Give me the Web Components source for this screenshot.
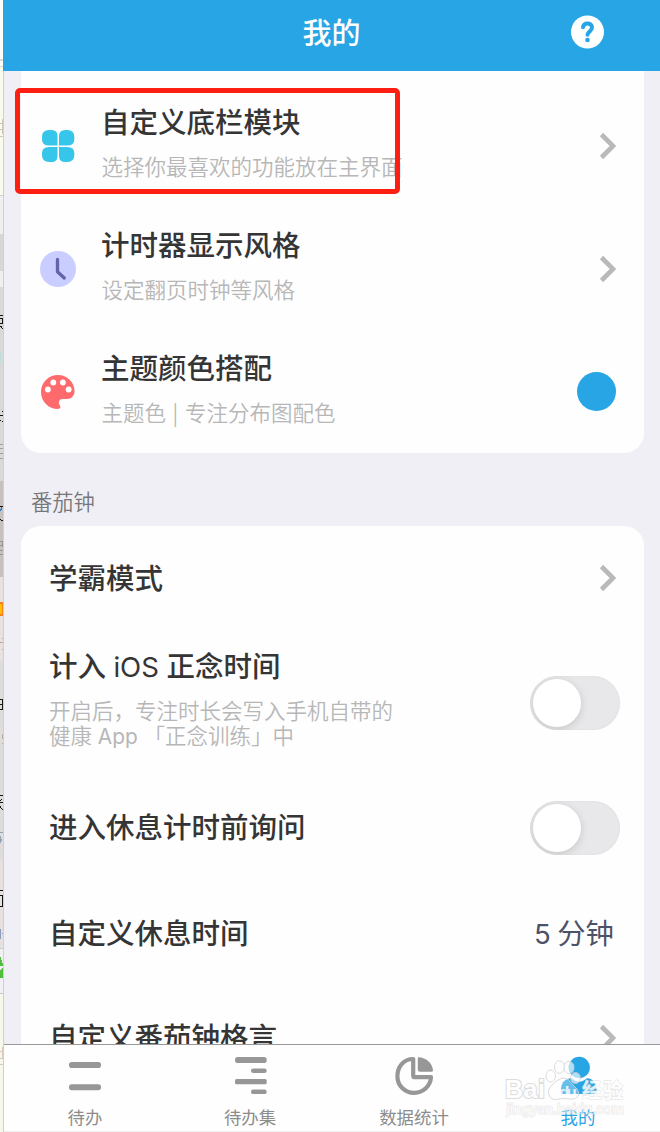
<!DOCTYPE html>
<html lang="zh-CN">
<head>
<meta charset="utf-8">
<title>我的</title>
<style>
  html, body {
    margin: 0;
    height: 100%;
    overflow: hidden;
  }

  body {
    --blue: #27a5e4;
    --page-color: #f0eff5;
    --ink: #353535;
    --muted: #b7b7b7;
    font-family: "Noto Sans CJK SC", sans-serif;
    color: var(--ink);
  }
</style>
</head>
<body>
<settings-app>
  <edge-strip slot="edge"></edge-strip>
  <app-header slot="header">我的</app-header>

  <settings-card first>
    <settings-row icon="clover" arrow marked>自定义底栏模块<span slot="sub">选择你最喜欢的功能放在主界面</span></settings-row>
    <settings-row icon="clock" arrow>计时器显示风格<span slot="sub">设定翻页时钟等风格</span></settings-row>
    <settings-row icon="palette">主题颜色搭配<span slot="sub">主题色 | 专注分布图配色</span><color-dot slot="end"></color-dot></settings-row>
  </settings-card>

  <section-label>番茄钟</section-label>

  <settings-card>
    <settings-row arrow>学霸模式</settings-row>
    <settings-row tall>计入 <latin-text>iOS</latin-text> 正念时间<span slot="sub">开启后，专注时长会写入手机自带的<br>健康 <latin-text>App</latin-text> 「正念训练」中</span><toggle-switch slot="end"></toggle-switch></settings-row>
    <settings-row>进入休息计时前询问<toggle-switch slot="end"></toggle-switch></settings-row>
    <settings-row value>自定义休息时间<span slot="end"><latin-text>5</latin-text> 分钟</span></settings-row>
    <settings-row arrow>自定义番茄钟格言</settings-row>
  </settings-card>

  <tab-bar slot="tabs">
    <tab-item icon="todo">待办</tab-item>
    <tab-item icon="todoset">待办集</tab-item>
    <tab-item icon="stats">数据统计</tab-item>
    <tab-item icon="me" active>我的</tab-item>
  </tab-bar>
  <site-mark slot="mark"></site-mark>
</settings-app>

<script>
const icons = {
  clover: `<svg width="36" height="36" viewBox="0 0 36 36" fill="#36c6ea">
    <path d="M9 2h2.500q6 0 6 6v9.500H9Q2 17.500 2 11.500V9Q2 2 9 2z"/>
    <path d="M27.300 2h-2q-6.300 0-6.300 6v9.500h8.300q7 0 7-6V9q0-7-7-7z"/>
    <path d="M9 34h2.500q6 0 6-6v-9H9q-7 0-7 6v2q0 7 7 7z"/>
    <path d="M27.300 34h-2q-6.300 0-6.300-6v-9h8.300q7 0 7 6v2q0 7-7 7z"/>
  </svg>`,
  clock: `<svg width="36" height="36" viewBox="0 0 36 36">
    <circle cx="18" cy="18" r="18" fill="#c9cdff"/>
    <path d="M17.500 8.500v12.200l6.800 6.300" fill="none" stroke="#6264aa" stroke-width="3.300" stroke-linecap="round" stroke-linejoin="round"/>
  </svg>`,
  palette: `<svg width="36" height="36" viewBox="0 0 36 36">
    <path d="M18 1C8.500 1 1 8.500 1 18s7.500 17 17 17c2.500 0 3-2 1.800-3.700C18 28.500 19 25 22.500 25H27c4.500 0 7.500-3.500 7.500-8C34.500 8 27 1 18 1z" fill="#ff6b6c"/>
    <g fill="#fff"><circle cx="7.900" cy="15.500" r="2.900"/><circle cx="13.300" cy="8.500" r="2.900"/><circle cx="22.900" cy="8.500" r="2.900"/><circle cx="28.700" cy="15.500" r="2.900"/></g>
  </svg>`,
  todo: `<svg width="40" height="40" viewBox="0 0 40 40" fill="#979797">
    <rect x="3" y="6" width="32" height="6" rx="2.800"/><rect x="3" y="28.300" width="32" height="6" rx="2.800"/>
  </svg>`,
  todoset: `<svg width="40" height="40" viewBox="0 0 40 40" fill="#979797">
    <rect x="5" y="1" width="31.700" height="6" rx="2.800"/><rect x="21" y="12.400" width="15.700" height="4.500" rx="2.200"/>
    <rect x="5" y="23" width="31.700" height="5.300" rx="1.500"/><rect x="21" y="33.600" width="15.700" height="4.500" rx="2.200"/>
  </svg>`,
  stats: `<svg width="40" height="40" viewBox="0 0 40 40">
    <path d="M19.200 3C9.500 3 3.400 11 3.400 20.200c0 9.300 7.300 16.700 16.800 16.700 9 0 16.300-7 16.800-15.700H21q-1.800 0-1.800-1.800z" fill="none" stroke="#979797" stroke-width="4.200" stroke-linejoin="round"/>
    <path d="M24.500 1.200C32 1.500 38.500 7 39 14.300q.1 1.400-1.300 1.400H26q-2.200 0-2.200-2.200V1.900q0-.7.700-.7z" fill="#979797"/>
  </svg>`,
  me: `<svg width="40" height="40" viewBox="0 0 40 40" fill="#27a5e4">
    <circle cx="21.200" cy="11.500" r="10.700"/>
    <path d="M3 38v-5.500Q4 24 11 22.500q3-.7 4.500 1.200 6 4 11.500 0 1.500-1.900 4.500-1.200Q37 24 38.500 32v6z"/>
  </svg>`
};

class SettingsApp extends HTMLElement {
  constructor() {
    super();
    this.attachShadow({ mode: "open" });
    this.shadowRoot.innerHTML = /*html*/`
      <style>
        :host { display: grid; grid-template-columns: 4px 1fr; height: 1132px; position: relative; }
        #page { display: flex; flex-direction: column; min-width: 0; height: 1132px; overflow: hidden; background: var(--page-color); }
        #content { flex: 1; min-height: 0; overflow: hidden; padding: 0 16px 0 17px; }
      </style>
      <slot name="edge"></slot>
      <div id="page">
        <slot name="header"></slot>
        <div id="content"><slot></slot></div>
        <slot name="tabs"></slot>
      </div>
      <slot name="mark"></slot>
    `;
  }
}

// Sliver of the window behind the app
class EdgeStrip extends HTMLElement {
  constructor() {
    super();
    this.attachShadow({ mode: "open" });
    this.shadowRoot.innerHTML = /*html*/`
      <style>
        :host { display: block; height: 1132px; overflow: hidden; }
        svg { display: block; }
      </style>
      <svg width="4" height="1132" viewBox="0 0 4 1132" shape-rendering="crispEdges">
        <rect width="4" height="66" fill="#fcfdf9"/>
        <path d="M0 59h3v2H0zM0 66h3v1H0z" fill="#d9d9d6"/>
        <rect y="67" width="4" height="128" fill="#fafaed"/>
        <path d="M0 123h3v1H0zM0 136h3v1H0zM2 119h1v15H2zM0 129h2v1H0z" fill="#cfc5b9"/>
        <path d="M0 195h4v1H0z" fill="#cfcfc9"/>
        <rect y="196" width="4" height="38" fill="#f0f0f0"/>
        <rect y="234" width="4" height="37" fill="#d7d7d7"/>
        <rect y="271" width="4" height="16" fill="#f0f0f0"/>
        <rect y="287" width="4" height="194" fill="#d9d9d8"/>
        <path d="M0 315h3v1H0zM0 318h3v1H0zM0 323h3v1H0zM2 318h1v6H2zM0 326h2v1H0zM1 327h1v1H1zM2 328h1v1H2z" fill="#171310"/>
        <rect y="353" width="1" height="9" fill="#b9dde1"/>
        <path d="M2 411h1v1H2zM0 415h3v1H0zM0 420h1v1H0zM2 421h1v1H2z" fill="#19130f"/>
        <path d="M0 444h3v1H0zM0 448h3v1H0zM0 453h3v1H0zM0 458h3v1H0z" fill="#a1a09e"/>
        <rect y="481" width="4" height="96" fill="#c6c1bf"/>
        <path d="M0 506h3v1H0zM0 519h1v1H0zM1 520h2v1H1z" fill="#111"/>
        <path d="M1 507h1v3H1zM0 509h1v2H0z" fill="#2080c9"/>
        <path d="M0 541h3v1H0zM0 545h3v1H0zM0 550h3v1H0zM0 554h3v1H0zM2 541h1v6H2z" fill="#989593"/>
        <rect y="577" width="4" height="83" fill="#e7e2df"/>
        <rect y="602" width="3" height="14" fill="#f3821e"/>
        <path d="M0 604h2v10H0z" fill="#ffc000"/>
        <path d="M2 638h1v1H2zM0 642h3v1H0zM2 649h1v1H2z" fill="#c4a292"/>
        <rect y="660" width="4" height="200" fill="#dedddb"/>
        <path d="M0 699h3v1H0zM0 704h3v1H0zM0 709h3v1H0zM2 699h1v11H2z" fill="#1b1713"/>
        <path d="M2 734h1v5H2zM2 743h1v1H2z" fill="#c0a99d"/>
        <path d="M0 795h3v1H0zM0 802h3v1H0zM1 799h1v1H1zM0 800h1v1H0zM0 806h1v2H0zM1 808h1v1H1zM2 809h1v1H2z" fill="#171313"/>
        <path d="M0 832h3v1H0zM0 836h1v7H0zM1 839h1v2H1z" fill="#91a3b6"/>
        <rect y="860" width="4" height="88" fill="#e6e1de"/>
        <path d="M0 890h3v1H0zM0 895h3v1H0zM2 895h1v12H2zM0 906h2v1H0z" fill="#111"/>
        <path d="M0 929h1v10H0zM2 933h1v1H2z" fill="#8c9cc0"/>
        <rect y="948" width="4" height="46" fill="#f1f1f3"/>
        <rect y="948" width="4" height="1" fill="#ccc"/>
        <path d="M0 957h1v3h1v3h1v3H0zM0 970l3-3v11H0z" fill="#50bf3e"/>
        <rect y="994" width="4" height="138" fill="#f8f8ea"/>
        <rect y="993" width="4" height="1" fill="#c9c9c6"/>
        <path d="M2 1047h1v12H2zM0 1051h3v1H0zM0 1058h2v1H0zM0 1064h3v1H0z" fill="#d8c9bd"/>
        <rect x="3" y="66" width="1" height="1066" fill="#d0d0d3"/>
        <rect x="3" y="0" width="1" height="71" fill="#27a5e4"/>
      </svg>
    `;
  }
}

class AppHeader extends HTMLElement {
  constructor() {
    super();
    this.attachShadow({ mode: "open" });
    this.shadowRoot.innerHTML = /*html*/`
      <style>
        :host {
          display: grid;
          grid-template-columns: 1fr auto 1fr;
          align-items: center;
          flex: none;
          height: 71px;
          box-sizing: border-box;
          padding: 0 55px 8px;
          color: #fff;
          background: var(--blue);
          font-size: 29px;
          line-height: 40px;
          font-weight: 500;
        }
        h1 { grid-column: 2; margin: 0 1px 1px 0; font: inherit; }
        svg { justify-self: end; display: block; }
      </style>
      <h1><slot></slot></h1>
      <svg width="34" height="34" viewBox="0 0 34 34">
        <circle cx="16.500" cy="17" r="16.500" fill="#fff"/>
        <path d="M12 12.300Q12.400 8.400 16.500 8.400t4.500 3.800q.1 2.300-2.200 4.200T16.500 19.800" fill="none" stroke="#27a5e4" stroke-width="4" stroke-linecap="round"/>
        <circle cx="16.500" cy="25" r="2.300" fill="#27a5e4"/>
      </svg>
    `;
  }
}

class SettingsCard extends HTMLElement {
  constructor() {
    super();
    this.attachShadow({ mode: "open" });
    this.shadowRoot.innerHTML = /*html*/`
      <style>
        :host { display: flex; flex-direction: column; background: #fefefe; border-radius: 20px 20px 0 0; }
        :host([first]) { --row-height: 123px; border-radius: 0 0 20px 20px; padding-top: 13px; }
        :host(:not([first])) ::slotted(:first-child) { height: 104px; }
      </style>
      <slot></slot>
    `;
  }
}

class SectionLabel extends HTMLElement {
  constructor() {
    super();
    this.attachShadow({ mode: "open" });
    this.shadowRoot.innerHTML = /*html*/`
      <style>
        :host { display: block; height: 73px; box-sizing: border-box; padding: 27px 0 0 10px; font-size: 21.300px; line-height: 42px; color: #77777b; font-weight: 350; }
      </style>
      <slot></slot>
    `;
  }
}

class SettingsRow extends HTMLElement {
  constructor() {
    super();
    this.attachShadow({ mode: "open" });
    const icon = this.getAttribute("icon");
    this.shadowRoot.innerHTML = /*html*/`
      <style>
        :host { display: flex; align-items: center; position: relative; height: var(--row-height, 105px); padding: 0 28px; box-sizing: border-box; flex: none; }
        :host([icon]) { padding-left: 19px; }
        :host([icon]:not([arrow])) { padding-right: 28px; }
        :host([tall]) { height: 145px; }
        :host(:not([arrow]):not([icon]):not([value])) { padding-right: 24px; }
        :host([value]) { padding-right: 30px; }
        #icon { display: flex; margin-right: 25px; }
        #text { flex: 1; white-space: nowrap; padding-bottom: 3px; }
        #title { font-size: 28.500px; line-height: 42px; font-weight: 500; word-spacing: 1px; }
        #sub { font-size: 21.500px; line-height: 47px; font-weight: 350; color: var(--muted); word-spacing: 1.800px; }
        :host([icon]) #sub { padding-left: .5px; }
        :host([tall]) #text { padding: 0 0 13px; }
        :host([tall]) #sub { margin-top: 11px; line-height: 25px; word-spacing: 1px; }
        #end { display: flex; font-size: 28.400px; line-height: 42px; color: #4d5269; }
        :host([value]) #end { padding-bottom: 2px; }
        :host([value]) #text { padding-bottom: 2px; }
        #mark { position: absolute; left: -6px; top: 4px; width: 385px; height: 106px; box-sizing: border-box; border: 5px solid #ff1e12; border-radius: 5px; }
        svg { display: block; }
      </style>
      ${icon ? `<div id="icon">${icons[icon]}</div>` : ""}
      <div id="text">
        <div id="title"><slot></slot></div>
        ${this.querySelector('[slot="sub"]') ? `<div id="sub"><slot name="sub"></slot></div>` : ""}
      </div>
      <div id="end">
        <slot name="end"></slot>
        ${this.hasAttribute("arrow") ? `<svg width="17" height="28" viewBox="0 0 17 28"><path d="M2.500 2.500L14 14 2.500 25.500" fill="none" stroke="#b9b9b9" stroke-width="4.600"/></svg>` : ""}
      </div>
      ${this.hasAttribute("marked") ? `<div id="mark"></div>` : ""}
    `;
  }
}

class LatinText extends HTMLElement {
  constructor() {
    super();
    this.attachShadow({ mode: "open" });
    this.shadowRoot.innerHTML = /*html*/`
      <style>
        :host { display: inline; font-family: Inter, sans-serif; font-size: .97em; font-weight: 400; line-height: 1; }
      </style><slot></slot>`;
  }
}

class ColorDot extends HTMLElement {
  constructor() {
    super();
    this.attachShadow({ mode: "open" });
    this.shadowRoot.innerHTML = /*html*/`
      <style>
        :host { display: block; width: 39px; height: 39px; border-radius: 50%; background: var(--blue); }
      </style>
    `;
  }
}

class ToggleSwitch extends HTMLElement {
  constructor() {
    super();
    this.attachShadow({ mode: "open" });
    this.shadowRoot.innerHTML = /*html*/`
      <style>
        :host { display: flex; align-items: center; width: 90px; height: 54px; box-sizing: border-box; padding: 0 3px; border-radius: 27px; overflow: hidden; background: #e8e8ea; box-shadow: inset 0 0 2px #d8d8da; }
        div { width: 48px; height: 48px; border-radius: 50%; background: #fff; box-shadow: 0 2px 9px rgba(0, 0, 0, .15); }
      </style>
      <div></div>
    `;
  }
}

class TabBar extends HTMLElement {
  constructor() {
    super();
    this.attachShadow({ mode: "open" });
    this.shadowRoot.innerHTML = /*html*/`
      <style>
        :host { display: grid; grid-template-columns: repeat(4, 1fr); flex: none; height: 88px; box-sizing: border-box; border-top: 1px solid #999; border-bottom: 1px solid #eee; background: #fefefe; }
      </style>
      <slot></slot>
    `;
  }
}

class TabItem extends HTMLElement {
  constructor() {
    super();
    this.attachShadow({ mode: "open" });
    this.shadowRoot.innerHTML = /*html*/`
      <style>
        :host { display: flex; flex-direction: column; align-items: center; padding-top: 11px; font-size: 17.400px; line-height: 24px; color: #8c8c8c; }
        :host([active]) { color: var(--blue); }
        :host([icon="todo"]) span { padding-right: 2px; }
        svg { display: block; margin-bottom: 9px; }
      </style>
      ${icons[this.getAttribute("icon")]}
      <span><slot></slot></span>
    `;
  }
}

class SiteMark extends HTMLElement {
  constructor() {
    super();
    this.attachShadow({ mode: "open" });
    this.shadowRoot.innerHTML = /*html*/`
      <style>
        :host { display: block; position: absolute; left: 500px; top: 1052px; }
        svg { display: block; }
        text { font-family: "Liberation Sans", "Noto Sans CJK SC", sans-serif; font-weight: 700; paint-order: stroke; }
      </style>
      <svg width="130" height="72" viewBox="0 0 130 72" fill="#fff" stroke="#d6d6d6" stroke-width="2" opacity=".85">
        <g stroke-width="1" fill-opacity=".75">
          <ellipse cx="50.700" cy="24" rx="4.800" ry="6"/><ellipse cx="59.500" cy="15" rx="5" ry="6.300"/>
          <ellipse cx="69" cy="15.500" rx="5" ry="6.300"/><ellipse cx="75.500" cy="26" rx="4.800" ry="5.500"/>
        </g>
        <path d="M64 26q5 0 8 6l5 5q4 6-1 9-4 2-7 1-5-1-10 0-8 2-10-4-2-5 3-10 4-4 6-5 3-2 6-2z" stroke-width="1" fill-opacity=".35"/>
        <text x="5" y="46" font-size="25" textLength="40">Bai</text>
        <text x="59" y="46" font-size="17" textLength="18" stroke="none">du</text>
        <text x="82" y="46" font-size="20" textLength="41" stroke-width="1.300" stroke-opacity=".65">经验</text>
        <text x="6" y="62" font-size="14" textLength="118" fill-opacity=".5" stroke-opacity=".6" stroke-width="1">jingyan.baidu.com</text>
      </svg>
    `;
  }
}

customElements.define('latin-text', LatinText);
customElements.define('color-dot', ColorDot);
customElements.define('toggle-switch', ToggleSwitch);
customElements.define('edge-strip', EdgeStrip);
customElements.define('app-header', AppHeader);
customElements.define('section-label', SectionLabel);
customElements.define('settings-row', SettingsRow);
customElements.define('settings-card', SettingsCard);
customElements.define('tab-item', TabItem);
customElements.define('tab-bar', TabBar);
customElements.define('site-mark', SiteMark);
customElements.define('settings-app', SettingsApp);
</script>
</body>
</html>
